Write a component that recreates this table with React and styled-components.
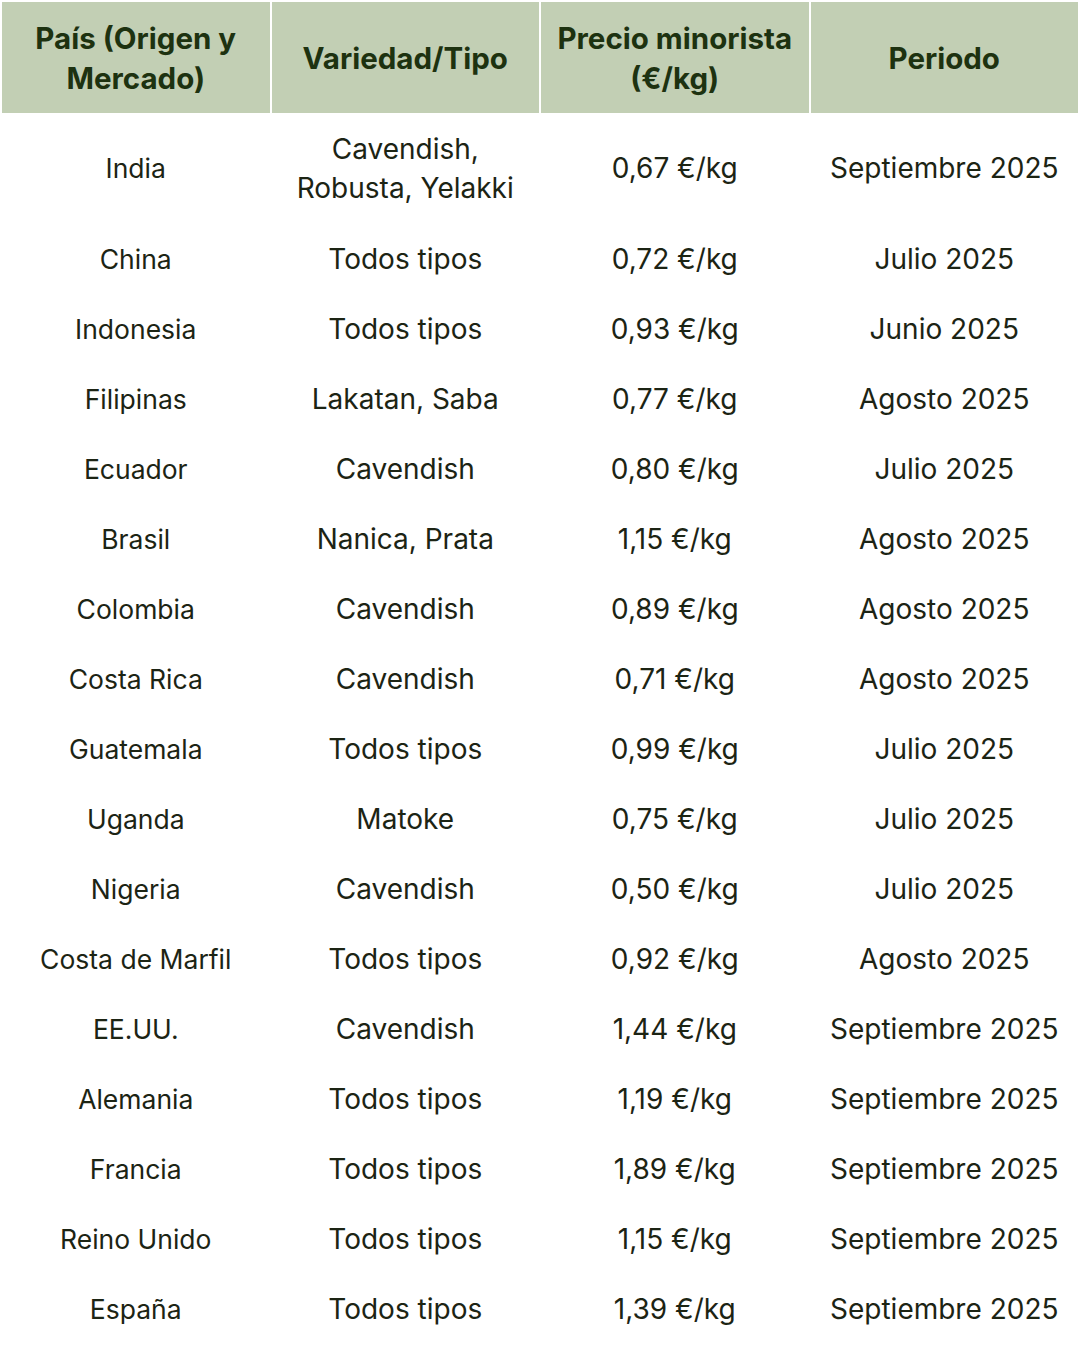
import styled, { createGlobalStyle } from "styled-components";

const GlobalStyle = createGlobalStyle`
  body {
    margin: 0;
    background: #ffffff;
    font-family: Inter, "Noto Sans", sans-serif;
  }
`;

const rows = [
  ["India", "Cavendish, Robusta, Yelakki", "0,67 €/kg", "Septiembre 2025"],
  ["China", "Todos tipos", "0,72 €/kg", "Julio 2025"],
  ["Indonesia", "Todos tipos", "0,93 €/kg", "Junio 2025"],
  ["Filipinas", "Lakatan, Saba", "0,77 €/kg", "Agosto 2025"],
  ["Ecuador", "Cavendish", "0,80 €/kg", "Julio 2025"],
  ["Brasil", "Nanica, Prata", "1,15 €/kg", "Agosto 2025"],
  ["Colombia", "Cavendish", "0,89 €/kg", "Agosto 2025"],
  ["Costa Rica", "Cavendish", "0,71 €/kg", "Agosto 2025"],
  ["Guatemala", "Todos tipos", "0,99 €/kg", "Julio 2025"],
  ["Uganda", "Matoke", "0,75 €/kg", "Julio 2025"],
  ["Nigeria", "Cavendish", "0,50 €/kg", "Julio 2025"],
  ["Costa de Marfil", "Todos tipos", "0,92 €/kg", "Agosto 2025"],
  ["EE.UU.", "Cavendish", "1,44 €/kg", "Septiembre 2025"],
  ["Alemania", "Todos tipos", "1,19 €/kg", "Septiembre 2025"],
  ["Francia", "Todos tipos", "1,89 €/kg", "Septiembre 2025"],
  ["Reino Unido", "Todos tipos", "1,15 €/kg", "Septiembre 2025"],
  ["España", "Todos tipos", "1,39 €/kg", "Septiembre 2025"],
];

const headers = ["País (Origen y Mercado)", "Variedad/Tipo", "Precio minorista (€/kg)", "Periodo"];

const Page = styled.div`
  padding: 2px 2px 0;
`;

const Row = styled.div`
  display: grid;
  grid-template-columns: repeat(4, 1fr);
  column-gap: 2px;
`;

const HeadCell = styled.div`
  background: #c2cfb4;
  color: #1d3210;
  font-weight: 700;
  font-size: 29.5px;
  line-height: 40px;
  height: 111px;
  display: flex;
  align-items: center;
  justify-content: center;
  text-align: center;
  padding: 0 12px;
  box-sizing: border-box;
`;

const Cell = styled.div`
  color: #1c2414;
  font-size: ${(p) => (p.$first ? "26.5px" : "28px")};
  line-height: 39px;
  padding: ${(p) => (p.$tall ? "16.5px 2px" : "15.5px 2px")};
  display: flex;
  align-items: center;
  justify-content: center;
  text-align: center;
`;

export default function App() {
  return (
    <Page>
      <GlobalStyle />
      <Row>
        {headers.map((h) => (
          <HeadCell key={h}>{h}</HeadCell>
        ))}
      </Row>
      {rows.map((r, i) => (
        <Row key={r[0]}>
          {r.map((c, j) => (
            <Cell key={j} $tall={i === 0} $first={j === 0}>
              {c}
            </Cell>
          ))}
        </Row>
      ))}
    </Page>
  );
}
